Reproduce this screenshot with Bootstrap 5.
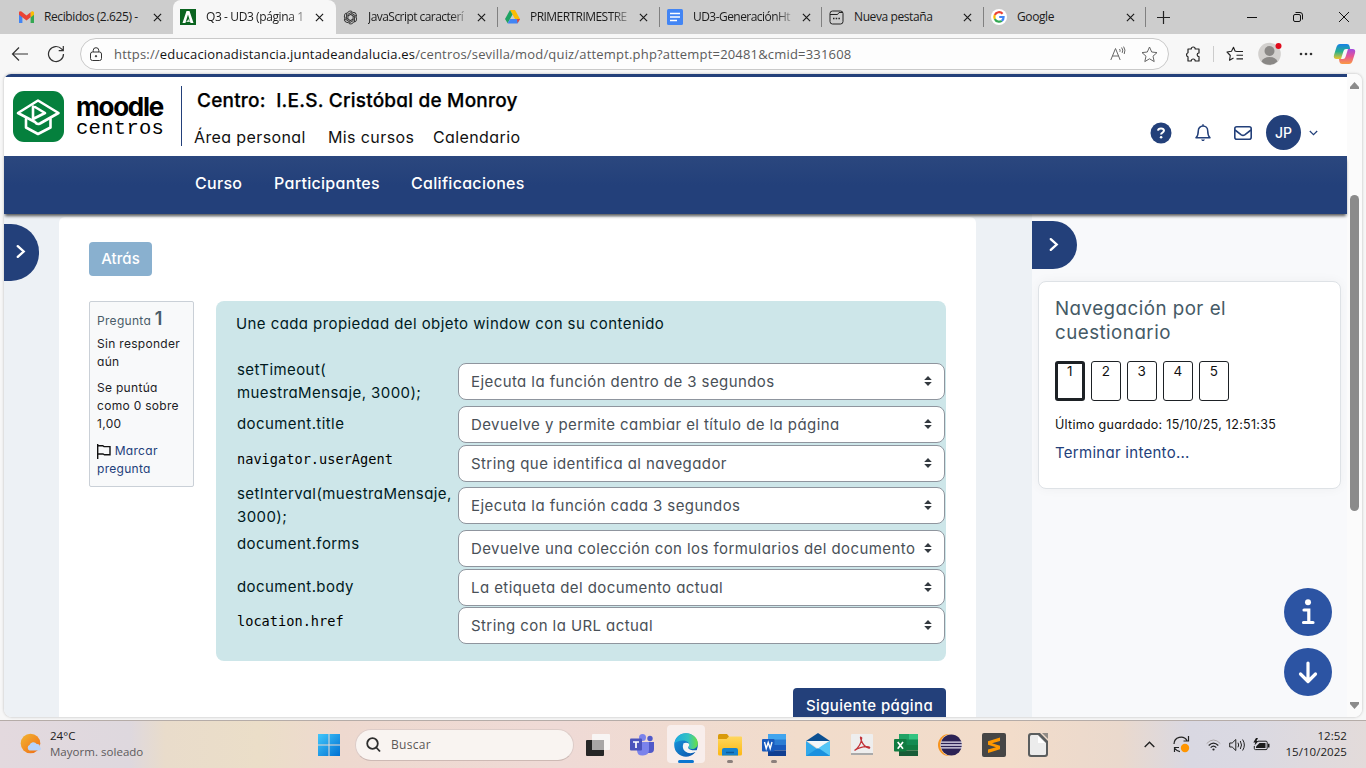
<!DOCTYPE html>
<html lang="es">
<head>
<meta charset="utf-8">
<meta name="viewport" content="width=device-width, initial-scale=1">
<title>Q3 - UD3 (página 1 de 5)</title>
<link href="https://cdn.jsdelivr.net/npm/bootstrap@5.3.0/dist/css/bootstrap.min.css" rel="stylesheet">
<style>
:root{--navy:#23407a;--seg:"Open Sans","Noto Sans",sans-serif;--pop:Inter,"Open Sans",sans-serif}
body{width:1366px;height:768px;overflow:hidden;background:#f7f7f7;font-family:var(--seg);font-size:12px;color:#1b1b1b}
svg{display:block;flex:none}
/* browser tabs */
.tabstrip{height:34px;background:#cdcdcd;padding-left:12px}
.btab{width:162px;height:34px;padding-left:7px;position:relative}
.btab .ttl{width:103px;margin-left:10px;white-space:nowrap;line-height:20px;letter-spacing:-.4px;background:linear-gradient(90deg,#1b1b1b 80%,#c4c4c4 100%);-webkit-background-clip:text;background-clip:text;-webkit-text-fill-color:transparent}
.btab .ttl.tight{letter-spacing:-.55px}
.btab .ttl.whole{background:none;-webkit-text-fill-color:currentColor}
.btab .x{margin-left:6px}
.btab.sep::after{content:"";position:absolute;right:0;top:7px;height:20px;width:1px;background:#808080}
.btab.cur{background:#f7f7f7;border-radius:8px 8px 0 0;width:163px;margin-left:-1px}
.newtab{margin-left:10px}
.winbtns{margin-left:auto;width:132px;padding-left:13px;gap:36px}
/* toolbar */
.toolbar{height:40px;padding-left:11px}
.urlbar{width:1089px;height:32px;border:1px solid #c9c9c9;border-radius:16px;background:#fdfdfd;margin-left:15px;padding-left:8px;padding-right:8px}
.urltext{font-size:13px;letter-spacing:.182px;margin-left:11px;padding-top:1px;color:#5b5b5b;white-space:nowrap}
.urltext b{font-weight:400;color:#111}
/* page viewport */
.viewport{margin:0 4px;height:643px;border-radius:7px 7px 8px 8px;overflow:hidden;background:#fbfbfb;box-shadow:0 0 2px 1px #d9d9d9}
.page{width:1343px;font-family:var(--pop);font-feature-settings:"cv11";color:#111;font-size:15px;letter-spacing:.42px;background:#edf1f5}
.tophead{height:82px;border-top:3px solid var(--navy);background:#fff;position:relative}
.brandbox{padding:14px 0 0 9px;width:177px}
.brandname{margin-left:12px;padding-top:3px;color:#000}
.bn1{font-size:26px;font-weight:700;letter-spacing:-1.25px;height:24px;line-height:26px}
.bn2{font-family:"Liberation Mono",monospace;font-size:20.5px;letter-spacing:.3px;height:22px;line-height:22px;font-feature-settings:normal}
.vline{width:1px;height:60px;background:var(--navy);margin-top:9px}
.center-name{font-size:19px;font-weight:500;-webkit-text-stroke:.25px #000;letter-spacing:.21px;line-height:24px;margin:12px 0 0 15px;white-space:pre;color:#000}
.toplinks{margin:12px 0 0 12px;font-size:16px;line-height:24px}
.toplinks span{white-space:nowrap;letter-spacing:.39px}
.userbar{position:absolute;left:1146px;top:38px}
.avatar{width:35px;height:35px;border-radius:50%;background:var(--navy);color:#fff;font-size:14px;font-weight:500;letter-spacing:0}
.mainnav{height:58px;background:linear-gradient(#2b477e,#23407a 50%);box-shadow:0 3px 3px -1px rgba(0,0,0,.65);position:relative;z-index:2;color:#fff;font-weight:500;padding-left:191px;padding-bottom:4px;font-size:16px}
.mainnav span{white-space:nowrap;letter-spacing:.3px}
.w-a{width:134px}.w-b{width:105px}.w-c{width:79px}.w-d{width:137px}
.body-row{height:503px}
.leftgap{width:55px;padding-top:10px}
.tog-l{width:35px;height:57px;border-radius:0 28px 28px 0;background:var(--navy);padding-left:11px;padding-bottom:2px}
.tog-r{width:45px;height:48px;border-radius:0 24px 24px 0;background:var(--navy);padding-left:16px;padding-bottom:1px;margin-top:7px}
.maincard{width:917px;background:#fff;border-radius:6px 6px 0 0;margin-top:3px;padding:25px 30px 0;height:500px}
.btn-back{width:63px;height:34px;background:#89b0cf;color:#fff;border-radius:4px;font-weight:500;font-size:15px;letter-spacing:.05px}
.qrow{margin-top:25px}
.info{width:105px;height:186px;border:1px solid #cad0d7;background:#f8f9fa;border-radius:2px;padding:8px 7px;font-size:12px;line-height:18px;letter-spacing:.3px;color:#1d2125}
.info div{white-space:nowrap}
.info .no{color:#4a5c69;line-height:19px;height:19px;margin-top:-1px;margin-bottom:7px}
.info .no b{font-size:18px;font-weight:600}
.info .flag,.endlink{color:#23407a}
.info .flag{margin-top:9px}
.formul{width:730px;height:360px;margin-left:22px;background:#cde6e9;border-radius:8px;padding:11px 0 0 20px;color:#001a1e}
.qtext{height:46px;line-height:23px}
.answers{display:grid;grid-template-columns:222px 487px;grid-template-rows:45px 39px 40px 45px 39px 38px 40px;line-height:23px}
.answers label{white-space:nowrap;padding-left:1px}
.answers .one{padding-top:9px}.answers .five{padding-top:5px}
.answers .code{font-family:"DejaVu Sans Mono",monospace;font-size:13.6px;letter-spacing:.02px;padding-top:6px;color:#000}
.sel{height:37px;margin-top:3px;border:1px solid #8f959e;border-radius:8px;background:#fff;color:#495057;padding:0 12px 1px;white-space:nowrap}
.sel.low{margin-top:5px}
.btn-next{width:153px;height:35px;background:var(--navy);color:#fff;border-radius:4px;font-weight:500;margin-top:27px;padding-top:2px;font-size:15px;letter-spacing:.38px}
.midgap{width:56px}
.drawer{width:315px;background:#f8f9fb}
.navcard{width:303px;height:208px;border:1px solid #dee2e6;border-radius:8px;background:#fff;margin:12px 0 0 6px;padding:15px 16px;box-shadow:0 0 12px rgba(0,0,0,.045)}
.navcard h5{font-size:18.75px;font-weight:400;line-height:24px;letter-spacing:.47px;color:#455a66;margin:0;white-space:nowrap}
.qnums{gap:6px;margin-top:16px}
.qn{width:30px;height:40px;border:1px solid #1d2125;border-radius:3px;text-align:center;font-size:13.5px;line-height:19px}
.qn.now{border-width:3px;line-height:15px}
.saved{font-size:12.5px;line-height:20px;letter-spacing:.29px;margin-top:14px;white-space:nowrap}
.endlink{line-height:22px;margin-top:7px;letter-spacing:.28px}
.fabs{gap:12px;margin:99px 0 0 252px}
.fab{width:48px;height:48px;border-radius:50%;background:#2c54a3}
.scroll{width:15px;height:643px;padding:8px 3px;background:#fbfbfb}
.thumb{width:9px;height:316px;border-radius:5px;background:#8b8b8b;margin-top:106px}
/* taskbar */
.taskbar{height:48px;margin-top:3px;border-top:1px solid #b5aca8;background:linear-gradient(90deg,#e3d9de 0,#ded8de 130px,#e9dccb 165px,#ebdec8 260px,#eed9cf 340px,#efdad6 560px,#f1dccb 800px,#f2dcca 1010px,#ead9cd 1120px,#d9d8e2 1190px,#dad9e2 1250px,#e3dbda 1366px)}
.weather{margin-left:20px;width:297px;line-height:16px;padding-bottom:2px}
.wtxt{margin-left:7px;font-size:11.5px;letter-spacing:.03px}
.searchbox{width:219px;height:32px;border-radius:16px;background:#f9f4f1;border:1px solid #ddccc8;border-bottom-color:#cdb9b4;margin-left:14px;padding-left:10px;color:#5c5856}
.apps{margin-left:2px}
.app{width:44px;height:47px;position:relative}
.app.run::after{content:"";position:absolute;bottom:5px;left:19px;width:6px;height:3px;border-radius:2px;background:#8b807c}
.app.on::before{content:"";position:absolute;left:3px;top:4px;width:38px;height:38px;border-radius:4px;background:#f8eeec}
.app.on svg{position:relative}
.app.on::after{content:"";position:absolute;bottom:5px;left:14px;width:16px;height:3px;border-radius:2px;background:#0a76d0}
.tray{margin-left:auto;margin-right:19px}
.clock{text-align:right;font-size:11.5px;line-height:16px;letter-spacing:.05px;width:77px;white-space:nowrap;padding-bottom:2px}
</style>
</head>
<body>
<svg width="0" height="0" class="position-absolute">
<defs>
<symbol id="x" viewBox="0 0 10 10"><path d="M1 1l8 8M9 1L1 9" stroke="#1a1a1a" stroke-width="1.3"/></symbol>
<symbol id="ud" viewBox="0 0 8 10"><path d="M4 0L7.8 4H.2zM4 10L.2 6h7.600z" fill="#343a40"/></symbol>
<symbol id="chev" viewBox="0 0 10 14"><path d="M2 2l5.500 5L2 12" fill="none" stroke="#fff" stroke-width="2.200" stroke-linecap="round"/></symbol>
<linearGradient id="ge" x1="0" y1="0" x2="1" y2="1"><stop offset="0" stop-color="#199ce0"/><stop offset="1" stop-color="#0b4fa8"/></linearGradient>
<linearGradient id="gt" x1="0" y1="0" x2="1" y2="0"><stop offset="0" stop-color="#1caae2"/><stop offset=".6" stop-color="#35c3c0"/><stop offset="1" stop-color="#6ae040"/></linearGradient>
<linearGradient id="gw" x1="0" y1="0" x2="1" y2="1"><stop offset="0" stop-color="#41c7fb"/><stop offset="1" stop-color="#0070d2"/></linearGradient>
<linearGradient id="gs" x1="0" y1="0" x2="1" y2="1"><stop offset="0" stop-color="#f2b632"/><stop offset="1" stop-color="#f06a14"/></linearGradient>
<linearGradient id="gf" x1="0" y1="0" x2="0" y2="1"><stop offset="0" stop-color="#ffd75e"/><stop offset="1" stop-color="#fdb813"/></linearGradient>
<linearGradient id="gc1" x1="0" y1="0" x2="0" y2="1"><stop offset="0" stop-color="#1681e8"/><stop offset=".5" stop-color="#28b08d"/><stop offset="1" stop-color="#f0c52c"/></linearGradient>
<linearGradient id="gc2" x1="0" y1="0" x2="0" y2="1"><stop offset="0" stop-color="#a34be0"/><stop offset=".5" stop-color="#e75692"/><stop offset="1" stop-color="#fa9a42"/></linearGradient>
</defs>
</svg>

<div class="tabstrip d-flex align-items-center">
  <div class="btab d-flex align-items-center">
    <svg width="15" height="12" viewBox="0 0 15 12"><path d="M0 1.500V12h3.400V5z" fill="#4285f4"/><path d="M15 1.500V12h-3.400V5z" fill="#34a853"/><path d="M11.600 1.300L13 .3q2-.6 2 1.500v2l-3.400 2.600z" fill="#fbbc04"/><path d="M0 3.800V1.600Q.3-.6 2.500.6l5 3.800 4.100-3.100v4.900L7.500 9.400z" fill="#ea4335"/></svg>
    <span class="ttl whole">Recibidos (2.625) -</span><svg class="x" width="9" height="9"><use href="#x"/></svg>
  </div>
  <div class="btab cur d-flex align-items-center">
    <svg width="16" height="16" viewBox="0 0 16 16"><path d="M0 0h16v16H0z" fill="#0b6420"/><path d="M2.500 14L6.500 2h3l4 12h-3L8 5.500 5.400 14z" fill="#fff"/><path d="M6 13l3-3 1 3z" fill="#cfe3d1"/></svg>
    <span class="ttl">Q3 - UD3 (página 1</span><svg class="x" width="9" height="9"><use href="#x"/></svg>
  </div>
  <div class="btab sep d-flex align-items-center">
    <svg width="15" height="15" viewBox="0 0 16 16" fill="none" stroke="#333" stroke-width="1"><g id="k"><path d="M4.700 3.500A3.200 3.200 0 0 1 10.700 2.900M5.200 9.700V4.600L9.600 2.100"/></g><use href="#k" transform="rotate(60 8 8)"/><use href="#k" transform="rotate(120 8 8)"/><use href="#k" transform="rotate(180 8 8)"/><use href="#k" transform="rotate(240 8 8)"/><use href="#k" transform="rotate(300 8 8)"/></svg>
    <span class="ttl tight">JavaScript caracterí</span><svg class="x" width="9" height="9"><use href="#x"/></svg>
  </div>
  <div class="btab sep d-flex align-items-center">
    <svg width="15" height="14" viewBox="0 0 15 14"><path d="M5 0h5l5 9h-5z" fill="#fbbc04"/><path d="M5 0l2.500 4.500L2.700 13.300 0 9z" fill="#1ea362"/><path d="M5.200 9H15l-2.500 4.500h-10z" fill="#4285f4"/><path d="M12 8.900h3l-2.500 4.400z" fill="#ea4335"/></svg>
    <span class="ttl tight">PRIMERTRIMESTRE</span><svg class="x" width="9" height="9"><use href="#x"/></svg>
  </div>
  <div class="btab sep d-flex align-items-center">
    <svg width="16" height="16" viewBox="0 0 16 16"><rect width="16" height="16" rx="1.500" fill="#4285f4"/><path d="M3 4.500h10M3 8h10M3 11.500h7" stroke="#fff" stroke-width="1.700"/></svg>
    <span class="ttl tight">UD3-GeneraciónHt</span><svg class="x" width="9" height="9"><use href="#x"/></svg>
  </div>
  <div class="btab sep d-flex align-items-center">
    <svg width="15" height="15" viewBox="0 0 15 15" fill="none" stroke="#222"><rect x="1" y="1" width="13" height="13" rx="2.500"/><path d="M1 4.500h7.500L10 2.500h4"/><path d="M4 8.500h1.500m1.200 0h1.500m1.200 0h1.500" stroke-width="1.500"/></svg>
    <span class="ttl whole">Nueva pestaña</span><svg class="x" width="9" height="9"><use href="#x"/></svg>
  </div>
  <div class="btab sep d-flex align-items-center">
    <svg width="16" height="16" viewBox="0 0 16 16"><circle cx="8" cy="8" r="8" fill="#fff"/><g fill="none" stroke-width="2.200"><path d="M11.600 4.700A4.700 4.700 0 0 0 3.800 6" stroke="#ea4335"/><path d="M3.800 6a4.700 4.700 0 0 0 0 4" stroke="#fbbc04"/><path d="M3.800 10a4.700 4.700 0 0 0 7 1.800" stroke="#34a853"/><path d="M10.800 11.800Q12.700 10.300 12.600 8H8.200" stroke="#4285f4"/></g></svg>
    <span class="ttl whole">Google</span><svg class="x" width="9" height="9"><use href="#x"/></svg>
  </div>
  <svg class="newtab" width="15" height="15" viewBox="0 0 15 15"><path d="M7.500 1v13M1 7.500h13" stroke="#222" stroke-width="1.200"/></svg>
  <div class="winbtns d-flex align-items-center">
    <svg width="10" height="10"><path d="M0 5.500h10" stroke="#111"/></svg>
    <svg width="10" height="10" viewBox="0 0 10 10" fill="none" stroke="#111"><rect x=".5" y="2.500" width="7" height="7" rx="1.500"/><path d="M2.500 .5H7A2.500 2.500 0 0 1 9.500 3v4.500"/></svg>
    <svg width="10" height="10" viewBox="0 0 10 10"><path d="M0 0l10 10M10 0L0 10" stroke="#111"/></svg>
  </div>
</div>

<div class="toolbar d-flex align-items-center">
  <svg width="17" height="16" viewBox="0 0 17 16" fill="none" stroke="#333" stroke-width="1.200"><path d="M17 8H1.500M8 1.500L1.500 8 8 14.500"/></svg>
  <svg width="18" height="18" viewBox="0 0 18 18" fill="none" stroke="#333" stroke-width="1.200" style="margin-left:19px"><path d="M16.500 9A7.500 7.500 0 1 1 14.500 3.900L16.200 5.500M16.300 1v4.700h-4.600"/></svg>
  <div class="urlbar d-flex align-items-center">
    <svg width="14" height="15" viewBox="0 0 14 15" fill="none" stroke="#333"><rect x="1.500" y="5" width="11" height="8.500" rx="2"/><path d="M4.200 5V3.500a2.800 2.800 0 0 1 5.600 0V5"/><circle cx="7" cy="9.200" r=".7" fill="#333"/></svg>
    <span class="urltext">https://<b>educacionadistancia.juntadeandalucia.es</b>/centros/sevilla/mod/quiz/attempt.php?attempt=20481&amp;cmid=331608</span>
    <svg class="ms-auto" width="16" height="16" viewBox="0 0 16 16" fill="none" stroke="#666"><path d="M.8 14L5.500 2.500 10.200 14M2.300 10h6.400M9.500 3q1 1.200.4 2.800M11.600 1.500q2 2.500.6 5.400M13.600.6q2.400 3.400.6 7.400"/></svg>
    <svg width="17" height="17" viewBox="0 0 17 17" fill="none" stroke="#666" stroke-linejoin="round" style="margin-left:15px;margin-right:2px"><path d="M8.500 1l2.200 5 5.300.6-4 3.600 1.200 5.400-4.700-2.800-4.700 2.800L5 10.200 1 6.600 6.300 6z"/></svg>
  </div>
  <svg width="16" height="17" viewBox="0 0 16 17" fill="none" stroke="#222" stroke-width="1.200" style="margin-left:16px"><path d="M3 3h3.200a2 2 0 0 1 4 0H14v4a1.800 1.800 0 0 0 0 3.700V15h-3.800a2 2 0 0 0-4 0H3v-4.200a2.100 2.100 0 0 1 0-4z" stroke-linejoin="round"/></svg>
  <svg width="1" height="16" style="margin-left:12px"><path d="M.5 0v16" stroke="#ccc"/></svg>
  <svg width="17" height="16" viewBox="0 0 17 16" fill="none" stroke="#222" stroke-width="1.100" style="margin-left:12px"><path d="M10.500 5.500L9 5 7.500 1.200 5.500 5.300 1 6l3.300 3.500-.8 4.800 4-2.200M10.500 5.500H17M10.500 9.200H17M10.500 12.900H17" stroke-linejoin="round"/></svg>
  <svg width="24" height="24" viewBox="0 0 24 24" style="margin-left:15px"><circle cx="11.500" cy="12" r="11.300" fill="#d2d0ce"/><circle cx="11.500" cy="9" r="5" fill="#8a8886"/><path d="M3.500 19.500q2-4.500 8-4.500t8 4.500a11.300 11.300 0 0 1-16 0z" fill="#8a8886"/><circle cx="20.500" cy="4" r="3" fill="#e00b1c"/></svg>
  <svg width="14" height="4" style="margin-left:17px"><g fill="#333"><circle cx="2" cy="2" r="1.300"/><circle cx="7" cy="2" r="1.300"/><circle cx="12" cy="2" r="1.300"/></g></svg>
  <svg width="23" height="22" viewBox="0 0 23 22" style="margin-left:20px"><path d="M7 1h7q2 0 2.500 2l.7 3H13q-2 0-2.500 2L8 16H3.500Q0 16 1 12L3.500 4Q4.500 1 7 1z" fill="url(#gc1)"/><path d="M16 21H9q-2 0-2.500-2L6 16h4q2 0 2.500-2L15 6h4.500Q23 6 22 10l-2.500 8Q18.500 21 16 21z" fill="url(#gc2)"/></svg>
</div>

<div class="viewport d-flex">
  <div class="page">
    <header class="tophead d-flex">
      <div class="brandbox d-flex">
        <svg width="51" height="51" viewBox="0 0 51 51"><rect width="51" height="51" rx="11" fill="#05803d"/><g fill="none" stroke="#fff" stroke-width="2.600" stroke-linejoin="round" stroke-linecap="round"><path d="M22 31L5 22 25 9.500 45.500 22 27 32.500q-3 1.500-5-1.500"/><path d="M20 15.500v12.500L32 22 22 16"/><path d="M13 28v8.500L25 43l12.500-6.500V28"/></g></svg>
        <div class="brandname"><div class="bn1">moodle</div><div class="bn2">centros</div></div>
      </div>
      <div class="vline"></div>
      <div>
        <div class="center-name">Centro:  I.E.S. Cristóbal de Monroy</div>
        <div class="toplinks d-flex"><span class="w-a">Área personal</span><span class="w-b">Mis cursos</span><span>Calendario</span></div>
      </div>
      <div class="userbar d-flex align-items-center">
        <svg width="22" height="22" viewBox="0 0 22 22"><circle cx="11" cy="11" r="10.500" fill="#23407a"/><path d="M8 8.600Q8.200 6.400 11 6.400t3 2.200q0 1.200-1.500 2-1.400.7-1.400 2" fill="none" stroke="#fff" stroke-width="2"/><circle cx="11.100" cy="15.300" r="1.300" fill="#fff"/></svg>
        <svg width="16" height="18" viewBox="0 0 16 18" fill="none" stroke="#23407a" stroke-width="1.500" stroke-linejoin="round" style="margin-left:23px"><path d="M8 .3V2M8 2a4.700 4.700 0 0 0-4.700 4.700c0 4-1 5.800-2.300 7.100h14c-1.300-1.300-2.300-3.100-2.300-7.100A4.700 4.700 0 0 0 8 2z"/><path d="M6 15.500h4L8.800 17H7.200z" fill="#23407a" stroke="none"/></svg>
        <svg width="18" height="14" viewBox="0 0 18 14" fill="none" stroke="#23407a" stroke-width="1.600" style="margin-left:23px"><rect x=".8" y=".8" width="16.400" height="12.400" rx="2"/><path d="M1 4l6.300 4.800q1.700 1.200 3.400 0L17 4"/></svg>
        <span class="avatar d-flex align-items-center justify-content-center" style="margin-left:14px">JP</span>
        <svg width="9" height="6" viewBox="0 0 9 6" fill="none" stroke="#23407a" stroke-width="1.200" style="margin-left:8px"><path d="M.8 1l3.700 3.700L8.200 1"/></svg>
      </div>
    </header>
    <nav class="mainnav d-flex align-items-center"><span class="w-c">Curso</span><span class="w-d">Participantes</span><span>Calificaciones</span></nav>
    <div class="body-row d-flex">
      <div class="leftgap"><div class="tog-l d-flex align-items-center"><svg width="12" height="15"><use href="#chev"/></svg></div></div>
      <main class="maincard">
        <div class="btn-back d-flex align-items-center justify-content-center">Atrás</div>
        <div class="qrow d-flex">
          <div class="info">
            <div class="no">Pregunta <b>1</b></div>
            <div>Sin responder<br>aún</div>
            <div class="mt-2">Se puntúa<br>como 0 sobre<br>1,00</div>
            <div class="flag"><svg class="d-inline-block align-middle" width="14" height="15" viewBox="0 0 14 15" fill="none" stroke="#111" stroke-width="1.400"><path d="M.7 0v15M.7 1.700h5l1.300.9h6v8.200H7.500L6 10H.7"/></svg> Marcar<br>pregunta</div>
          </div>
          <div class="formul">
            <div class="qtext">Une cada propiedad del objeto window con su contenido</div>
            <div class="answers">
              <label>setTimeout(<br>muestraMensaje, 3000);</label><div class="sel low d-flex align-items-center justify-content-between">Ejecuta la función dentro de 3 segundos<svg width="8" height="10"><use href="#ud"/></svg></div>
              <label class="one">document.title</label><div class="sel d-flex align-items-center justify-content-between">Devuelve y permite cambiar el título de la página<svg width="8" height="10"><use href="#ud"/></svg></div>
              <label class="code">navigator.userAgent</label><div class="sel d-flex align-items-center justify-content-between">String que identifica al navegador<svg width="8" height="10"><use href="#ud"/></svg></div>
              <label>setInterval(muestraMensaje,<br>3000);</label><div class="sel low d-flex align-items-center justify-content-between">Ejecuta la función cada 3 segundos<svg width="8" height="10"><use href="#ud"/></svg></div>
              <label class="five">document.forms</label><div class="sel d-flex align-items-center justify-content-between">Devuelve una colección con los formularios del documento<svg width="8" height="10"><use href="#ud"/></svg></div>
              <label class="one">document.body</label><div class="sel d-flex align-items-center justify-content-between">La etiqueta del documento actual<svg width="8" height="10"><use href="#ud"/></svg></div>
              <label class="code">location.href</label><div class="sel d-flex align-items-center justify-content-between">String con la URL actual<svg width="8" height="10"><use href="#ud"/></svg></div>
            </div>
          </div>
        </div>
        <div class="btn-next ms-auto d-flex align-items-center justify-content-center">Siguiente página</div>
      </main>
      <div class="midgap"></div>
      <aside class="drawer">
        <div class="tog-r d-flex align-items-center"><svg width="12" height="15"><use href="#chev"/></svg></div>
        <div class="navcard">
          <h5>Navegación por el<br>cuestionario</h5>
          <div class="qnums d-flex"><div class="qn now">1</div><div class="qn">2</div><div class="qn">3</div><div class="qn">4</div><div class="qn">5</div></div>
          <div class="saved">Último guardado: 15/10/25, 12:51:35</div>
          <div class="endlink">Terminar intento...</div>
        </div>
        <div class="fabs d-flex flex-column">
          <div class="fab d-flex align-items-center justify-content-center"><svg width="14" height="26" viewBox="0 0 14 26"><circle cx="7" cy="3.300" r="3" fill="#fff"/><path d="M3 11h4.800v12M2.500 23.500h9.500" fill="none" stroke="#fff" stroke-width="3.200" stroke-linecap="round"/></svg></div>
          <div class="fab d-flex align-items-center justify-content-center"><svg width="20" height="23" viewBox="0 0 20 23"><path d="M10 2v18M2.500 13l7.500 7.500 7.500-7.500" fill="none" stroke="#fff" stroke-width="3.200" stroke-linecap="round" stroke-linejoin="round"/></svg></div>
        </div>
      </aside>
    </div>
  </div>
  <div class="scroll d-flex flex-column">
    <svg width="9" height="7"><path d="M4.500 0L9 5v2H0V5z" fill="#8b8b8b"/></svg>
    <div class="thumb"></div>
    <svg class="mt-auto" width="9" height="7"><path d="M4.500 7L9 2V0H0v2z" fill="#8b8b8b"/></svg>
  </div>
</div>

<div class="taskbar d-flex align-items-center">
  <div class="weather d-flex align-items-center">
    <svg width="23" height="22" viewBox="0 0 23 22"><circle cx="10.500" cy="10.500" r="9.800" fill="url(#gs)"/><path d="M9.500 17.500a3 3 0 0 1 0-5.500 4 4 0 0 1 7.200-1 3 3 0 0 1 3.300 3 2 2 0 0 1-.5 3.500z" fill="#b8d3fa"/></svg>
    <div class="wtxt"><div>24°C</div><div style="color:#5d5a5c">Mayorm. soleado</div></div>
  </div>
  <svg width="24" height="24" viewBox="0 0 24 24"><path d="M1 1h10.500v10.500H1zM12.500 1H23v10.500H12.500zM1 12.500h10.500V23H1zM12.500 12.500H23V23H12.500z" fill="url(#gw)"/></svg>
  <div class="searchbox d-flex align-items-center"><svg width="15" height="16" viewBox="0 0 15 16" fill="none" stroke="#2e2e2e" stroke-width="1.800"><circle cx="6.500" cy="6.500" r="5.300"/><path d="M10.300 10.500l3.700 4"/></svg><span style="margin-left:10px;letter-spacing:.3px">Buscar</span></div>
  <div class="apps d-flex">
    <div class="app d-flex align-items-center justify-content-center"><svg width="24" height="24" viewBox="0 0 24 24"><rect y="7" width="18" height="16" rx="1" fill="#262626"/><rect x="6" y="1" width="18" height="16" rx="1" fill="#f8f5f4"/><path d="M6 7h12v10H6z" fill="#a8a6a6"/></svg></div>
    <div class="app d-flex align-items-center justify-content-center"><svg width="24" height="24" viewBox="0 0 24 24"><circle cx="12.500" cy="4.500" r="3.500" fill="#7b83eb"/><circle cx="20" cy="5.500" r="2.700" fill="#5059c9"/><path d="M17 9h7v7q0 4-4 4t-4-2z" fill="#5059c9"/><path d="M7 9h12v8q0 5-6 5.500T7 17z" fill="#7b83eb"/><rect y="5.500" width="12" height="12" rx="1" fill="#4b53bc"/><path d="M3 9h6M6 9v6" stroke="#fff" stroke-width="1.700"/></svg></div>
    <div class="app on d-flex align-items-center justify-content-center"><svg width="24" height="24" viewBox="0 0 24 24"><circle cx="12" cy="12" r="11.800" fill="url(#ge)"/><path d="M.5 10.500C1.500 4 6 .3 12 .3 19 .3 24 5.500 23.800 10.500c0 3.500-2.800 5.500-5.700 5.500-3 0-4.100-1.200-3.300-2.400C16.500 9.500 12 7.300 8.500 7.600 5 7.700 2 9 .5 10.500z" fill="url(#gt)"/><path d="M9.500 10.300q-1.800 5 1.500 8 4.500 3.500 11 .5-1 2-3 3.300l5-5.600q-1 1.200-5.700.7-6-1.400-3.400-4.200 1-2.300-1.200-3-2-.8-4.200.3z" fill="#f5f5f5"/></svg></div>
    <div class="app run d-flex align-items-center justify-content-center"><svg width="24" height="22" viewBox="0 0 24 22"><path d="M0 1.500Q0 0 1.500 0H9l2 2.500V6H0z" fill="#d99a0b"/><path d="M0 5h8.500l2.500-2.500h12q1 0 1 1V20q0 1.500-1.500 1.500h-21Q0 21.500 0 20z" fill="url(#gf)"/><path d="M4 21.500V16q0-2 2-2h12q2 0 2 2v5.500z" fill="#1782ce"/><path d="M8 18.500h8" stroke="#0c5a99" stroke-width="1.500"/></svg></div>
    <div class="app run d-flex align-items-center justify-content-center"><svg width="24" height="22" viewBox="0 0 24 22"><path d="M6 0h18v6H6z" fill="#41a5ee"/><path d="M6 5.500h18V11H6z" fill="#2b7cd3"/><path d="M6 11h18v5.500H6z" fill="#185abd"/><path d="M6 16.500h18V22H6z" fill="#103f91"/><rect y="5" width="12.500" height="12.500" rx="1" fill="#185abd"/><path d="M2.500 8l1.700 6.500L6.200 8.500l2 6L10 8" fill="none" stroke="#fff" stroke-width="1.400"/></svg></div>
    <div class="app d-flex align-items-center justify-content-center"><svg width="24" height="23" viewBox="0 0 24 23"><path d="M0 8L12 0l12 8z" fill="#0b4f91"/><path d="M0 8l12 8.500L24 8v15H0z" fill="#32a9ea"/><path d="M12 14.500L24 8v15z" fill="#55c6f6"/><path d="M0 23l12-8 12 8z" fill="#1b91df"/><path d="M1.500 8h21L12 15.500z" fill="#f4f7fa"/></svg></div>
    <div class="app d-flex align-items-center justify-content-center"><svg width="22" height="22" viewBox="0 0 22 22"><rect y="0" width="22" height="20" rx="1" fill="#eee"/><path d="M0 19h22v2H0z" fill="#aaa"/><path d="M3.500 16.500Q10 12 10.700 4q-2.200-2.500-.4 2.500Q12.500 12.500 18 14.200q2-1.200-2-1.500-6-.3-12.500 3.800z" fill="none" stroke="#c23238" stroke-width="1.300"/></svg></div>
    <div class="app d-flex align-items-center justify-content-center"><svg width="24" height="22" viewBox="0 0 24 22"><path d="M5 0h10v6H5z" fill="#21a366"/><path d="M15 0h9v6h-9z" fill="#33c481"/><path d="M5 5.500h19V11H5z" fill="#138b51"/><path d="M5 11h19v5.500H5z" fill="#107c41"/><path d="M5 16.500h19V22H5z" fill="#185c37"/><rect y="5" width="12.500" height="12.500" rx="1" fill="#107c41"/><path d="M3.700 8L9 14.700M9 8l-5.300 6.700" stroke="#fff" stroke-width="1.700"/></svg></div>
    <div class="app d-flex align-items-center justify-content-center"><svg width="24" height="24" viewBox="0 0 24 24"><circle cx="11" cy="12" r="11" fill="#f7941e"/><circle cx="13.200" cy="12" r="11" fill="#f2dcca"/><circle cx="13.300" cy="12" r="10.600" fill="#2c2255"/><path d="M3 9.200h21M2.600 12h21.400M3 14.800h21" stroke="#e8e4f2" stroke-width="1.300"/></svg></div>
    <div class="app d-flex align-items-center justify-content-center"><svg width="24" height="24" viewBox="0 0 24 24"><rect width="24" height="24" rx="2" fill="#464646"/><path d="M18 4.500L6 8.300v3.500l8 2.500-8 2.300v3.300l12-3.700v-3.500l-8-2.500 8-2.300z" fill="#ff9800"/></svg></div>
    <div class="app d-flex align-items-center justify-content-center"><svg width="20" height="24" viewBox="0 0 20 24"><path d="M3 0h9l8 8v13q0 3-3 3H3q-3 0-3-3V3q0-3 3-3z" fill="#5a5d5e"/><path d="M14 0h6v6z" fill="#908b86"/><path d="M3.500 2H10l8 8v10.500Q18 22 16.500 22h-13Q2 22 2 20.500v-17Q2 2 3.500 2z" fill="#ececec"/><path d="M10 3v7h7z" fill="#fff"/></svg></div>
  </div>
  <div class="tray d-flex align-items-center">
    <svg width="11" height="7" viewBox="0 0 11 7" fill="none" stroke="#222" stroke-width="1.400"><path d="M.7 6l4.800-4.800L10.300 6"/></svg>
    <svg width="17" height="17" viewBox="0 0 17 17" fill="none" stroke="#222" stroke-width="1.200" style="margin-left:18px"><path d="M1 8a7 7 0 0 1 13-3.500M15.500 0v5h-5M1.500 16v-4.500H6M2 12.500q2 3 5 3.200"/><circle cx="12" cy="12" r="4.200" fill="#ff9500" stroke="none"/></svg>
    <svg width="15" height="12" viewBox="0 0 15 12" fill="none" stroke="#222" style="margin-left:16px"><path d="M.7 4.500q6.800-7 13.600 0" stroke="#aaa5a5"/><path d="M2.700 6.500q4.800-4.800 9.600 0M4.700 8.600q2.800-2.800 5.600 0" stroke-width="1.200"/><circle cx="7.500" cy="10.500" r="1.100" fill="#222" stroke="none"/></svg>
    <svg width="17" height="14" viewBox="0 0 17 14" fill="none" stroke="#222" style="margin-left:8px"><path d="M.7 5h2.500L6.800 1.500v11L3.200 9H.7zM9 4.700q1.300 2.300 0 4.600M11.300 3q2.400 4 0 8M13.600 1.500q3.500 5.500 0 11"/></svg>
    <svg width="17" height="13" viewBox="0 0 17 13" style="margin-left:7px"><path d="M5 3.200h8q1.200 0 1.200 1.200v6q0 1.200-1.200 1.200H2.500q-1.200 0-1.200-1.200V8" fill="none" stroke="#1c1c1c"/><path d="M6.500 5H12.500v5H3V8.500z" fill="#1c1c1c"/><path d="M15 5.800h1.500v3.600H15z" fill="#1c1c1c"/><path d="M3 0L.3 4.500h2L1.500 7.500 5.500 3h-2L5 0z" fill="#1c1c1c"/></svg>
    <div class="clock"><div>12:52</div><div>15/10/2025</div></div>
  </div>
</div>
</body>
</html>
